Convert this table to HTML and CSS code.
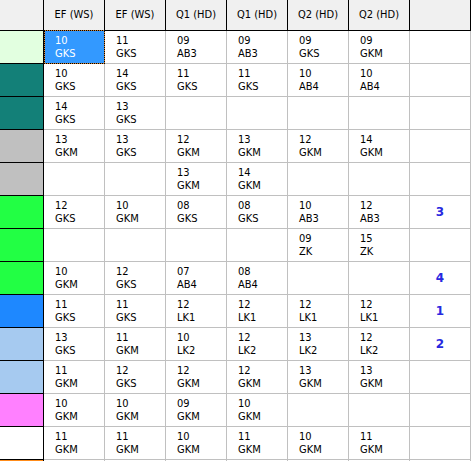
FILE: index.html
```html
<!DOCTYPE html>
<html>
<head>
<meta charset="utf-8">
<link rel="stylesheet" href="styles.css">
</head>
<body>
<div class="grid">
  <div class="hd hd-corner"></div>
  <div class="hd">EF (WS)</div>
  <div class="hd">EF (WS)</div>
  <div class="hd">Q1 (HD)</div>
  <div class="hd">Q1 (HD)</div>
  <div class="hd">Q2 (HD)</div>
  <div class="hd">Q2 (HD)</div>
  <div class="hd"></div>

  <div class="lc c-lightgreen"></div>
  <div class="cell sel">10<br>GKS</div>
  <div class="cell">11<br>GKS</div>
  <div class="cell">09<br>AB3</div>
  <div class="cell">09<br>AB3</div>
  <div class="cell">09<br>GKS</div>
  <div class="cell">09<br>GKM</div>
  <div class="cell"></div>

  <div class="lc c-teal"></div>
  <div class="cell">10<br>GKS</div>
  <div class="cell">14<br>GKS</div>
  <div class="cell">11<br>GKS</div>
  <div class="cell">11<br>GKS</div>
  <div class="cell">10<br>AB4</div>
  <div class="cell">10<br>AB4</div>
  <div class="cell"></div>

  <div class="lc c-teal"></div>
  <div class="cell">14<br>GKS</div>
  <div class="cell">13<br>GKS</div>
  <div class="cell"></div>
  <div class="cell"></div>
  <div class="cell"></div>
  <div class="cell"></div>
  <div class="cell"></div>

  <div class="lc c-gray"></div>
  <div class="cell">13<br>GKM</div>
  <div class="cell">13<br>GKS</div>
  <div class="cell">12<br>GKM</div>
  <div class="cell">13<br>GKM</div>
  <div class="cell">12<br>GKM</div>
  <div class="cell">14<br>GKM</div>
  <div class="cell"></div>

  <div class="lc c-gray"></div>
  <div class="cell"></div>
  <div class="cell"></div>
  <div class="cell">13<br>GKM</div>
  <div class="cell">14<br>GKM</div>
  <div class="cell"></div>
  <div class="cell"></div>
  <div class="cell"></div>

  <div class="lc c-green"></div>
  <div class="cell">12<br>GKS</div>
  <div class="cell">10<br>GKM</div>
  <div class="cell">08<br>GKS</div>
  <div class="cell">08<br>GKS</div>
  <div class="cell">10<br>AB3</div>
  <div class="cell">12<br>AB3</div>
  <div class="cell num">3</div>

  <div class="lc c-green"></div>
  <div class="cell"></div>
  <div class="cell"></div>
  <div class="cell"></div>
  <div class="cell"></div>
  <div class="cell">09<br>ZK</div>
  <div class="cell">15<br>ZK</div>
  <div class="cell"></div>

  <div class="lc c-green"></div>
  <div class="cell">10<br>GKM</div>
  <div class="cell">12<br>GKS</div>
  <div class="cell">07<br>AB4</div>
  <div class="cell">08<br>AB4</div>
  <div class="cell"></div>
  <div class="cell"></div>
  <div class="cell num">4</div>

  <div class="lc c-blue"></div>
  <div class="cell">11<br>GKS</div>
  <div class="cell">11<br>GKS</div>
  <div class="cell">12<br>LK1</div>
  <div class="cell">12<br>LK1</div>
  <div class="cell">12<br>LK1</div>
  <div class="cell">12<br>LK1</div>
  <div class="cell num">1</div>

  <div class="lc c-lightblue"></div>
  <div class="cell">13<br>GKS</div>
  <div class="cell">11<br>GKM</div>
  <div class="cell">10<br>LK2</div>
  <div class="cell">12<br>LK2</div>
  <div class="cell">13<br>LK2</div>
  <div class="cell">12<br>LK2</div>
  <div class="cell num">2</div>

  <div class="lc c-lightblue"></div>
  <div class="cell">11<br>GKM</div>
  <div class="cell">12<br>GKS</div>
  <div class="cell">12<br>GKM</div>
  <div class="cell">12<br>GKM</div>
  <div class="cell">13<br>GKM</div>
  <div class="cell">13<br>GKM</div>
  <div class="cell"></div>

  <div class="lc c-pink"></div>
  <div class="cell">10<br>GKM</div>
  <div class="cell">10<br>GKM</div>
  <div class="cell">09<br>GKM</div>
  <div class="cell">10<br>GKM</div>
  <div class="cell"></div>
  <div class="cell"></div>
  <div class="cell"></div>

  <div class="lc c-white"></div>
  <div class="cell">11<br>GKM</div>
  <div class="cell">11<br>GKM</div>
  <div class="cell">10<br>GKM</div>
  <div class="cell">11<br>GKM</div>
  <div class="cell">10<br>GKM</div>
  <div class="cell">11<br>GKM</div>
  <div class="cell"></div>

  <div class="lc c-orange"></div>
  <div class="cell"></div>
  <div class="cell"></div>
  <div class="cell"></div>
  <div class="cell"></div>
  <div class="cell"></div>
  <div class="cell"></div>
  <div class="cell"></div>
</div>
</body>
</html>
```

FILE: styles.css
```css
html, body {
  margin: 0;
  padding: 0;
  background: #ffffff;
  overflow: hidden;
}

.grid {
  display: grid;
  grid-template-columns: 44px repeat(7, 61px);
  grid-template-rows: 31px;
  grid-auto-rows: 33px;
  height: 461px;
  overflow: hidden;
  font-family: "DejaVu Sans Condensed", "DejaVu Sans", sans-serif;
  font-size: 11px;
  color: #000000;
}

.hd {
  box-sizing: border-box;
  background: #f0f0f0;
  border-right: 1px solid #000000;
  border-bottom: 1px solid #000000;
  display: flex;
  align-items: center;
  justify-content: center;
  padding-bottom: 2px;
}

.lc {
  box-sizing: border-box;
  border-right: 1px solid #000000;
  border-bottom: 1px solid #000000;
}

.cell {
  box-sizing: border-box;
  border-right: 1px solid #c0c0c0;
  border-bottom: 1px solid #c0c0c0;
  padding: 3px 0 0 11px;
  line-height: 13px;
  background: #ffffff;
}

.sel {
  position: relative;
  background: #3399ff;
  color: #ffffff;
}

.sel::before {
  content: "";
  position: absolute;
  top: -1px;
  left: 0;
  right: -1px;
  bottom: -1px;
  border: 1px solid #d08030;
}

.sel::after {
  content: "";
  position: absolute;
  top: -1px;
  left: 0;
  right: -1px;
  bottom: -1px;
  border: 1px dotted #000000;
}

.num {
  padding: 0;
  display: flex;
  align-items: center;
  justify-content: center;
  color: #2828e0;
  font-weight: bold;
  font-family: "DejaVu Sans", sans-serif;
  font-size: 12px;
}

.c-lightgreen { background: #e2ffe0; }
.c-teal { background: #138078; }
.c-gray { background: #c0c0c0; }
.c-green { background: #22ff44; }
.c-blue { background: #1e88ff; }
.c-lightblue { background: #a6caf0; }
.c-pink { background: #ff80ff; }
.c-white { background: #ffffff; }
.c-orange { background: #ff8c1a; }
```
